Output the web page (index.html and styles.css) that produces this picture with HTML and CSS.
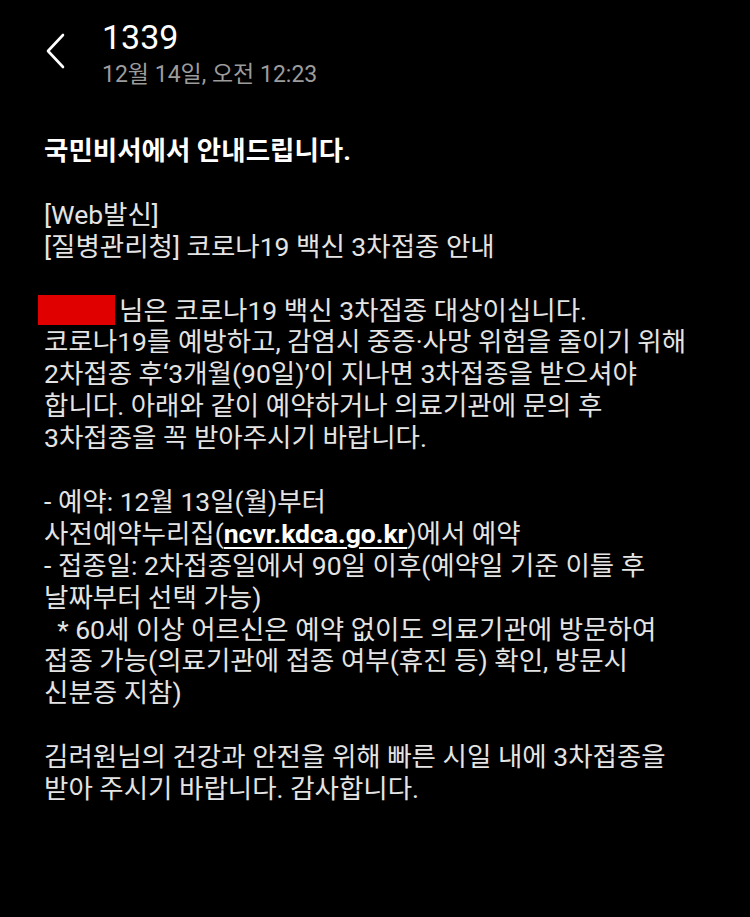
FILE: index.html
```html
<!DOCTYPE html>
<html lang="ko">
<head>
<meta charset="utf-8">
<link rel="stylesheet" href="styles.css">
</head>
<body>
<div class="screen">
  <header class="topbar">
    <div class="back">
      <svg width="24" height="36" viewBox="0 0 24 36"><path d="M19 2 L4 18 L19 34" fill="none" stroke="#ffffff" stroke-width="2.6" stroke-linecap="round" stroke-linejoin="round"/></svg>
    </div>
    <div class="titles">
      <div class="title">1339</div>
      <div class="subtitle">12월 14일, 오전 12:23</div>
    </div>
  </header>
  <main class="message">
    <p class="lead">국민비서에서 안내드립니다.</p>
    <p>[Web발신]<br>[질병관리청] 코로나19 백신 3차접종 안내</p>
    <p><span class="redact"></span>님은 코로나19 백신 3차접종 대상이십니다.<br>코로나19를 예방하고, 감염시 중증·사망 위험을 줄이기 위해<br>2차접종 후‘3개월(90일)’이 지나면 3차접종을 받으셔야<br>합니다. 아래와 같이 예약하거나 의료기관에 문의 후<br>3차접종을 꼭 받아주시기 바랍니다.</p>
    <p>- 예약: 12월 13일(월)부터<br>사전예약누리집(<span class="link">ncvr.kdca.go.kr</span>)에서 예약<br>- 접종일: 2차접종일에서 90일 이후(예약일 기준 이틀 후<br>날짜부터 선택 가능)<br>  * 60세 이상 어르신은 예약 없이도 의료기관에 방문하여<br>접종 가능(의료기관에 접종 여부(휴진 등) 확인, 방문시<br>신분증 지참)</p>
    <p>김려원님의 건강과 안전을 위해 빠른 시일 내에 3차접종을<br>받아 주시기 바랍니다. 감사합니다.</p>
  </main>
</div>
</body>
</html>
```
FILE: styles.css
```css
html, body {
  margin: 0;
  padding: 0;
  background: #000;
}
.screen {
  width: 750px;
  height: 917px;
  background: #000;
  color: #e4e4e4;
  font-family: Roboto, "Noto Sans CJK KR", sans-serif;
  overflow: hidden;
}
.topbar {
  display: flex;
  align-items: flex-start;
  padding: 16px 0 0 44px;
}
.back {
  width: 58px;
  padding-top: 17px;
}
.back svg {
  display: block;
}
.titles {
  display: flex;
  flex-direction: column;
}
.title {
  font-size: 34px;
  line-height: 42px;
  color: #ffffff;
}
.subtitle {
  font-size: 23px;
  line-height: 30px;
  color: #9c9c9c;
  margin-top: 2px;
}
.message {
  padding: 45px 0 0 44px;
  font-size: 26.5px;
  line-height: 31.9px;
}
.message p {
  margin: 0 0 31.9px 0;
  white-space: pre-wrap;
}
.lead {
  font-weight: 700;
  color: #ffffff;
}
.redact {
  display: inline-block;
  width: 77px;
  height: 30px;
  background: #e00000;
  vertical-align: -5px;
  margin-left: -6px;
  margin-right: 4px;
}
.link {
  color: #ffffff;
  font-weight: 700;
  text-decoration: underline;
  text-underline-offset: 4px;
  text-decoration-thickness: 2px;
}
```
